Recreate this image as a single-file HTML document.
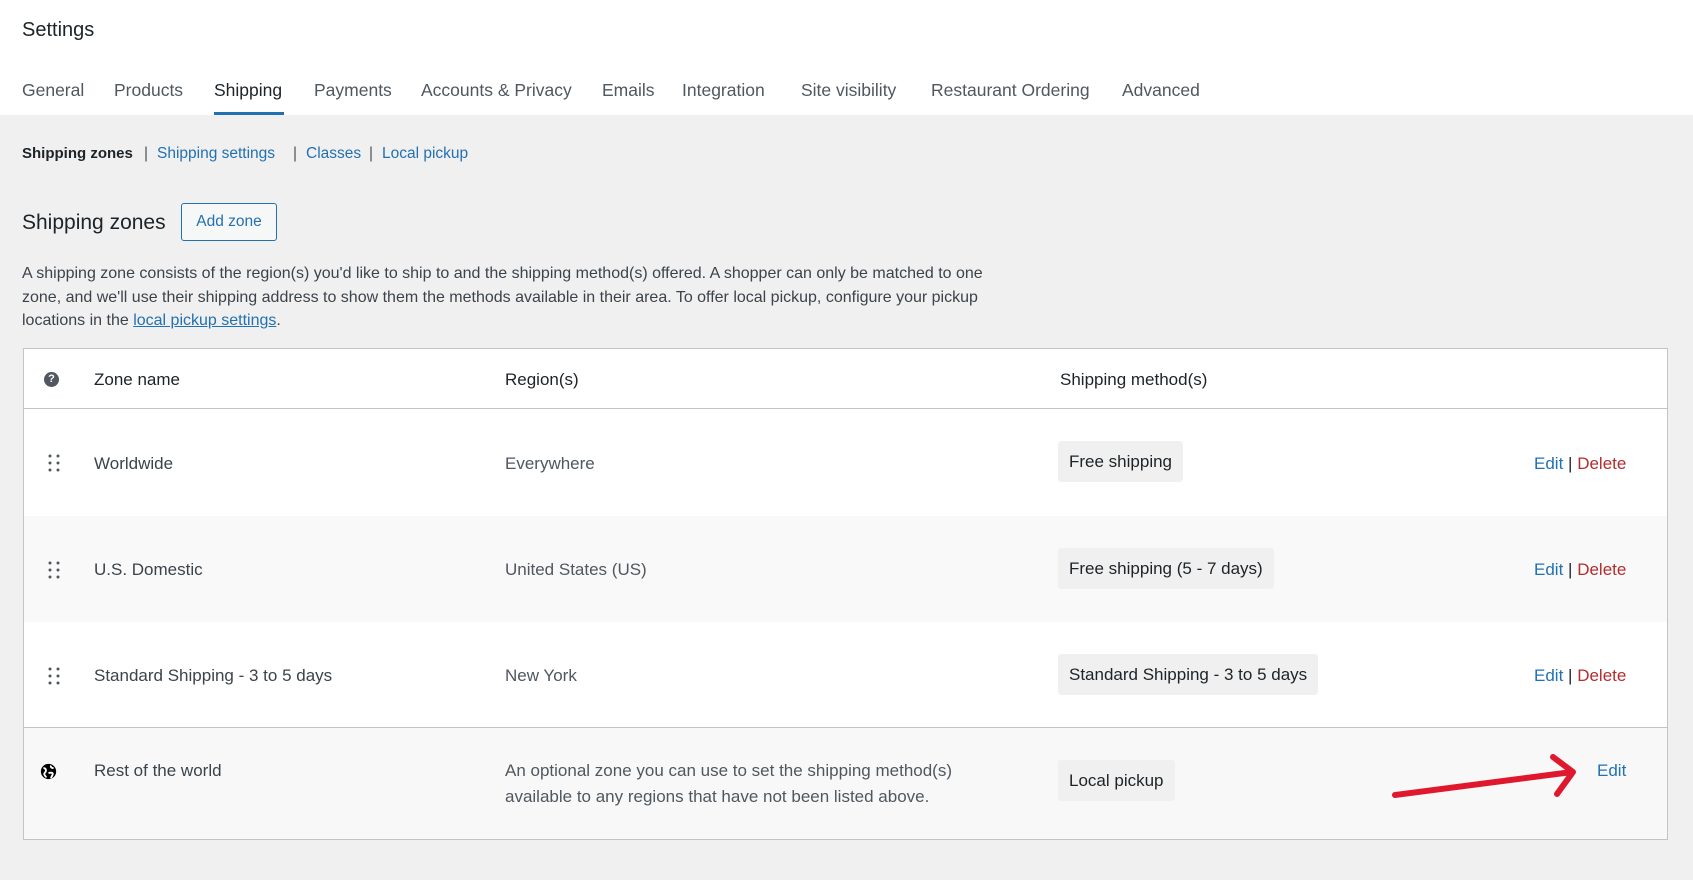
<!DOCTYPE html>
<html><head><meta charset="utf-8"><style>
*{margin:0;padding:0;box-sizing:border-box}
body{width:1693px;height:880px;background:#f0f0f1;font-family:"Liberation Sans",sans-serif;color:#1d2327;position:relative;overflow:hidden}
.a{position:absolute;white-space:nowrap}
.hdr{position:absolute;left:0;top:0;width:1693px;height:115px;background:#fff}
.tab{position:absolute;top:80px;font-size:17.5px;color:#50575e}
.sub{position:absolute;top:145px;font-size:15.5px;color:#2271b1}
.tbl{position:absolute;left:23px;top:348px;width:1645px;height:492px;border:1px solid #c3c4c7;background:#fff;overflow:hidden}
.row{position:absolute;left:0;width:1643px}
.nm{position:absolute;left:70px;font-size:17px;color:#3c434a}
.rg{position:absolute;left:481px;font-size:17px;color:#50575e}
.bd{position:absolute;left:1034px;height:41px;background:#f0f0f0;border-radius:3px;font-size:17px;padding:0 11px;line-height:41px;color:#1d2327}
.ed{position:absolute;font-size:17px;color:#2271b1}
.dl{color:#b32d2e}
.dots{position:absolute;left:24px;width:12px;height:18px}
</style></head><body>
<div class="hdr"></div>
<div class="a" style="left:22px;top:19px;font-size:20px;color:#1d2327">Settings</div>
<div class="tab" style="left:22px">General</div>
<div class="tab" style="left:114px">Products</div>
<div class="tab" style="left:214px;color:#1d2327">Shipping</div>
<div class="a" style="left:214px;top:112px;width:70px;height:3px;background:#2271b1"></div>
<div class="tab" style="left:314px">Payments</div>
<div class="tab" style="left:421px">Accounts &amp; Privacy</div>
<div class="tab" style="left:602px">Emails</div>
<div class="tab" style="left:682px">Integration</div>
<div class="tab" style="left:801px">Site visibility</div>
<div class="tab" style="left:931px">Restaurant Ordering</div>
<div class="tab" style="left:1122px">Advanced</div>

<div class="sub" style="left:22px;color:#1d2327;font-weight:bold;font-size:15px">Shipping zones</div>
<div class="sub" style="left:144px;color:#50575e">|</div>
<div class="sub" style="left:157px">Shipping settings</div>
<div class="sub" style="left:293px;color:#50575e">|</div>
<div class="sub" style="left:306px">Classes</div>
<div class="sub" style="left:369px;color:#50575e">|</div>
<div class="sub" style="left:382px">Local pickup</div>

<div class="a" style="left:22px;top:211px;font-size:21px">Shipping zones</div>
<div class="a" style="left:181px;top:203px;width:96px;height:38px;border:1px solid #2271b1;border-radius:3px;background:#f6f7f7;color:#2271b1;font-size:15.5px;line-height:36px;text-align:center">Add zone</div>
<div class="a" style="left:22px;top:262px;font-size:16px;line-height:23.5px;color:#3c434a">A shipping zone consists of the region(s) you'd like to ship to and the shipping method(s) offered. A shopper can only be matched to one<br>zone, and we'll use their shipping address to show them the methods available in their area. To offer local pickup, configure your pickup<br>locations in the <span style="color:#2271b1;text-decoration:underline">local pickup settings</span>.</div>

<div class="tbl">
 <div class="row" style="top:0;height:60px;border-bottom:1px solid #c3c4c7">
  <div class="a" style="left:20px;top:23px;width:15px;height:15px;border-radius:50%;background:#50575e;color:#fff;font-size:11px;font-weight:bold;text-align:center;line-height:15px">?</div>
  <div class="nm" style="top:21px;color:#1d2327">Zone name</div>
  <div class="rg" style="top:21px;color:#1d2327">Region(s)</div>
  <div class="rg" style="left:1036px;top:21px;color:#1d2327">Shipping method(s)</div>
 </div>
 <div class="row" style="top:60px;height:107px;background:#fff">
  <svg class="dots" style="top:45px" viewBox="0 0 12 18"><g fill="#50575e"><circle cx="2" cy="2" r="1.5"/><circle cx="10" cy="2" r="1.5"/><circle cx="2" cy="9" r="1.5"/><circle cx="10" cy="9" r="1.5"/><circle cx="2" cy="16" r="1.5"/><circle cx="10" cy="16" r="1.5"/></g></svg>
  <div class="nm" style="top:45px">Worldwide</div>
  <div class="rg" style="top:45px">Everywhere</div>
  <div class="bd" style="top:32px">Free shipping</div>
  <div class="ed" style="left:1510px;top:45px">Edit <span style="color:#1d2327">|</span> <span class="dl">Delete</span></div>
 </div>
 <div class="row" style="top:167px;height:106px;background:#f9f9f9">
  <svg class="dots" style="top:45px" viewBox="0 0 12 18"><g fill="#50575e"><circle cx="2" cy="2" r="1.5"/><circle cx="10" cy="2" r="1.5"/><circle cx="2" cy="9" r="1.5"/><circle cx="10" cy="9" r="1.5"/><circle cx="2" cy="16" r="1.5"/><circle cx="10" cy="16" r="1.5"/></g></svg>
  <div class="nm" style="top:44px">U.S. Domestic</div>
  <div class="rg" style="top:44px">United States (US)</div>
  <div class="bd" style="top:32px">Free shipping (5 - 7 days)</div>
  <div class="ed" style="left:1510px;top:44px">Edit <span style="color:#1d2327">|</span> <span class="dl">Delete</span></div>
 </div>
 <div class="row" style="top:273px;height:106px;background:#fff;border-bottom:1px solid #c3c4c7">
  <svg class="dots" style="top:45px" viewBox="0 0 12 18"><g fill="#50575e"><circle cx="2" cy="2" r="1.5"/><circle cx="10" cy="2" r="1.5"/><circle cx="2" cy="9" r="1.5"/><circle cx="10" cy="9" r="1.5"/><circle cx="2" cy="16" r="1.5"/><circle cx="10" cy="16" r="1.5"/></g></svg>
  <div class="nm" style="top:44px">Standard Shipping - 3 to 5 days</div>
  <div class="rg" style="top:44px">New York</div>
  <div class="bd" style="top:32px">Standard Shipping - 3 to 5 days</div>
  <div class="ed" style="left:1510px;top:44px">Edit <span style="color:#1d2327">|</span> <span class="dl">Delete</span></div>
 </div>
 <div class="row" style="top:379px;height:111px;background:#f8f8f8">
  <svg class="a" style="left:16px;top:35px" width="17" height="17" viewBox="0 0 20 20"><circle cx="10" cy="10" r="9" fill="#000"/><path d="M4 6c2 0 3 1 3 3s-2 2-2 4 2 2 2 4M13 3c-1 2 1 3 3 3M10 12c2-1 5-1 5 1s-2 3-2 5" stroke="#fff" stroke-width="2.2" fill="none"/></svg>
  <div class="nm" style="top:33px">Rest of the world</div>
  <div class="rg" style="top:30px;line-height:26px">An optional zone you can use to set the shipping method(s)<br>available to any regions that have not been listed above.</div>
  <div class="bd" style="top:32px">Local pickup</div>
  <div class="ed" style="left:1573px;top:33px">Edit</div>
 </div>
</div>
<svg class="a" style="left:0;top:0" width="1693" height="880"><path d="M1395 795 L1572 772 M1553 757 L1573 772 L1557 794" stroke="#e0182d" stroke-width="6" stroke-linecap="round" stroke-linejoin="round" fill="none"/></svg>
</body></html>
